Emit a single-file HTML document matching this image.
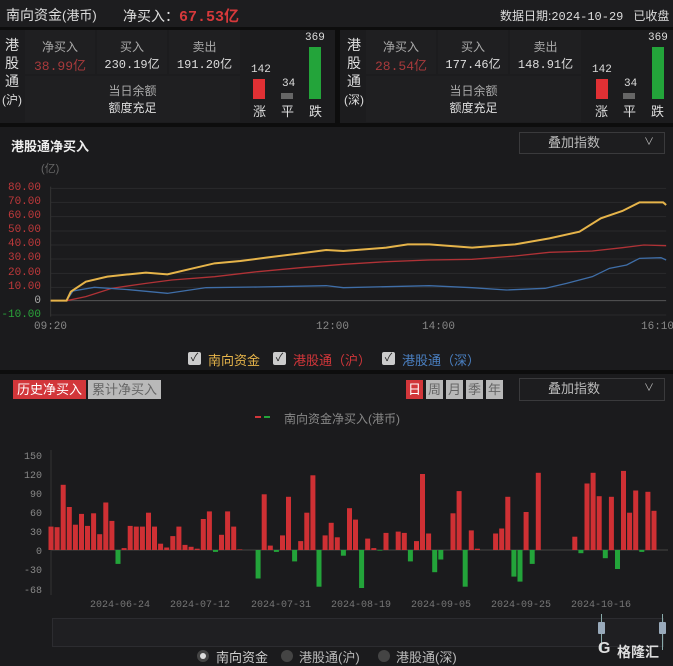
<!DOCTYPE html>
<html><head><meta charset="utf-8"><style>
*{margin:0;padding:0;box-sizing:border-box}
body{width:673px;height:666px;background:#1b1b1d;font-family:"Liberation Sans","Noto Sans CJK SC",sans-serif;color:#ccc;position:relative;overflow:hidden;font-size:12px}
.a{position:absolute}
.mono{font-family:"Liberation Mono","Noto Sans CJK SC",monospace}
.cell{position:absolute;background:#1f1f21;text-align:center}
.vl{position:absolute;width:20px;font-size:14px;line-height:18px;color:#ddd;text-align:center}
.sel{position:absolute;border:1px solid #3a3a3c;background:#1d1d1f;color:#bbb;font-size:13px;padding-left:28px;line-height:20px}
.dt{position:absolute;top:600px;font-size:10px;color:#777;font-family:"Liberation Mono",monospace}
</style></head><body>
<div class="a" style="left:0;top:0;width:673px;height:27px;background:#1d1d1f"></div>
<div class="a" style="left:6px;top:5px;font-size:14px;color:#ddd">南向资金<span style="font-size:13px">(港币)</span></div>
<div class="a" style="left:123px;top:5px;font-size:14px;color:#ddd">净买入：<span class="mono" style="color:#d6393b;font-weight:bold;font-size:15px">67.53亿</span></div>
<div class="a" style="left:500px;top:7px;font-size:12px;color:#ddd">数据日期:<span class="mono">2024-10-29</span>&nbsp;&nbsp;&nbsp;已收盘</div>
<div class="a" style="left:0;top:27px;width:673px;height:3px;background:#0d0d0d"></div>
<div class="a" style="left:335px;top:27px;width:5px;height:98px;background:#0d0d0d"></div>

<div class="a" style="left:0;top:30px;width:335px;height:93px;background:#1c1c1e"></div>
<div class="vl" style="left:2px;top:36px">港<br>股<br>通<br><span style="font-size:12px">(沪)</span></div>
<div class="cell" style="left:25px;top:30px;width:70px;height:44px"><div style="margin-top:8px;color:#aaa">净买入</div><div class="mono" style="color:#a83a3c;font-size:13px">38.99亿</div></div>
<div class="cell" style="left:97px;top:30px;width:70px;height:44px"><div style="margin-top:8px;color:#aaa">买入</div><div class="mono" style="color:#ddd;font-size:12px">230.19亿</div></div>
<div class="cell" style="left:169px;top:30px;width:71px;height:44px"><div style="margin-top:8px;color:#aaa">卖出</div><div class="mono" style="color:#ddd;font-size:12px">191.20亿</div></div>
<div class="cell" style="left:25px;top:76px;width:215px;height:46px"><div style="margin-top:6px;color:#aaa">当日余额</div><div style="color:#ddd">额度充足</div></div>
<div class="a mono" style="left:251px;top:64px;font-size:11px;color:#ddd">142</div>
<div class="a" style="left:253px;top:79px;width:12px;height:20px;background:#e03034"></div>
<div class="a" style="left:253px;top:101px;color:#ddd;font-size:13px">涨</div>
<div class="a mono" style="left:282px;top:78px;font-size:11px;color:#ddd">34</div>
<div class="a" style="left:281px;top:93px;width:12px;height:6px;background:#666"></div>
<div class="a" style="left:281px;top:101px;color:#ddd;font-size:13px">平</div>
<div class="a mono" style="left:305px;top:32px;font-size:11px;color:#ddd">369</div>
<div class="a" style="left:309px;top:47px;width:12px;height:52px;background:#23a43a"></div>
<div class="a" style="left:309px;top:101px;color:#ddd;font-size:13px">跌</div>

<div class="a" style="left:340px;top:30px;width:333px;height:93px;background:#1c1c1e"></div>
<div class="vl" style="left:344px;top:36px">港<br>股<br>通<br><span style="font-size:12px">(深)</span></div>
<div class="cell" style="left:366px;top:30px;width:70px;height:44px"><div style="margin-top:8px;color:#aaa">净买入</div><div class="mono" style="color:#a83a3c;font-size:13px">28.54亿</div></div>
<div class="cell" style="left:438px;top:30px;width:70px;height:44px"><div style="margin-top:8px;color:#aaa">买入</div><div class="mono" style="color:#ddd;font-size:12px">177.46亿</div></div>
<div class="cell" style="left:510px;top:30px;width:71px;height:44px"><div style="margin-top:8px;color:#aaa">卖出</div><div class="mono" style="color:#ddd;font-size:12px">148.91亿</div></div>
<div class="cell" style="left:366px;top:76px;width:215px;height:46px"><div style="margin-top:6px;color:#aaa">当日余额</div><div style="color:#ddd">额度充足</div></div>
<div class="a mono" style="left:592px;top:64px;font-size:11px;color:#ddd">142</div>
<div class="a" style="left:596px;top:79px;width:12px;height:20px;background:#e03034"></div>
<div class="a" style="left:595px;top:101px;color:#ddd;font-size:13px">涨</div>
<div class="a mono" style="left:624px;top:78px;font-size:11px;color:#ddd">34</div>
<div class="a" style="left:623px;top:93px;width:12px;height:6px;background:#666"></div>
<div class="a" style="left:623px;top:101px;color:#ddd;font-size:13px">平</div>
<div class="a mono" style="left:648px;top:32px;font-size:11px;color:#ddd">369</div>
<div class="a" style="left:652px;top:47px;width:12px;height:52px;background:#23a43a"></div>
<div class="a" style="left:651px;top:101px;color:#ddd;font-size:13px">跌</div>

<div class="a" style="left:0;top:123px;width:673px;height:4px;background:#0d0d0d"></div>

<div class="a" style="left:11px;top:136px;font-size:13px;color:#eee;font-weight:bold">港股通净买入</div>
<div class="sel" style="left:519px;top:132px;width:146px;height:22px">叠加指数<span style="position:absolute;right:10px;font-size:10px">∨</span></div>
<div class="a" style="left:41px;top:160px;color:#666;font-size:11px">(亿)</div>
<svg class="a" style="left:0;top:125px" width="673" height="250" viewBox="0 0 1568 750" preserveAspectRatio="none">
<g stroke="#2a2a2c" stroke-width="1">
<line x1="118" x2="1552" y1="190" y2="190" vector-effect="non-scaling-stroke"/><line x1="118" x2="1552" y1="232" y2="232" vector-effect="non-scaling-stroke"/><line x1="118" x2="1552" y1="275" y2="275" vector-effect="non-scaling-stroke"/><line x1="118" x2="1552" y1="318" y2="318" vector-effect="non-scaling-stroke"/><line x1="118" x2="1552" y1="360" y2="360" vector-effect="non-scaling-stroke"/><line x1="118" x2="1552" y1="402" y2="402" vector-effect="non-scaling-stroke"/><line x1="118" x2="1552" y1="445" y2="445" vector-effect="non-scaling-stroke"/><line x1="118" x2="1552" y1="487" y2="487" vector-effect="non-scaling-stroke"/><line x1="118" x2="1552" y1="570" y2="570" vector-effect="non-scaling-stroke"/>
</g>
<line x1="118" x2="1552" y1="527" y2="527" stroke="#555" vector-effect="non-scaling-stroke"/>
<line x1="118" x2="118" y1="185" y2="575" stroke="#333" vector-effect="non-scaling-stroke"/>
<polyline fill="none" stroke="#b03236" stroke-width="1.3" vector-effect="non-scaling-stroke" points="118,527 155,527 200,515 260,490 340,475 400,465 500,455 600,440 700,428 800,418 900,410 1000,405 1100,403 1200,393 1280,382 1380,378 1450,368 1500,360 1552,362"/>
<polyline fill="none" stroke="#3f6ea8" stroke-width="1.3" vector-effect="non-scaling-stroke" points="155,527 170,498 220,487 300,494 390,505 480,488 600,486 760,482 800,488 900,485 1000,482 1100,488 1180,495 1270,490 1320,475 1380,455 1420,430 1460,420 1490,400 1540,398 1552,405"/>
<polyline fill="none" stroke="#e6b44a" stroke-width="2" vector-effect="non-scaling-stroke" points="118,527 155,527 165,500 200,470 250,455 300,448 340,443 390,448 450,430 500,415 560,408 620,398 700,385 760,375 800,378 900,368 950,358 1000,358 1100,368 1200,358 1280,340 1350,320 1400,280 1450,258 1490,232 1545,232 1552,240"/>
</svg>
<div class="a mono" style="left:0;top:181px;width:41px;text-align:right;font-size:11px;line-height:14.1px;color:#c0393b">80.00<br>70.00<br>60.00<br>50.00<br>40.00<br>30.00<br>20.00<br>10.00<br><span style="color:#aaa">0</span><br><span style="color:#2aa43a">-10.00</span></div>
<div class="a mono" style="left:34px;top:321px;font-size:11px;color:#888">09:20</div>
<div class="a mono" style="left:316px;top:321px;font-size:11px;color:#888">12:00</div>
<div class="a mono" style="left:422px;top:321px;font-size:11px;color:#888">14:00</div>
<div class="a mono" style="left:641px;top:321px;font-size:11px;color:#888">16:10</div>
<div class="a" style="left:188px;top:352px;width:13px;height:13px;background:#ccc;border-radius:2px;color:#222;font-size:11px;line-height:13px;text-align:center">✓</div>
<div class="a" style="left:208px;top:350px;color:#e6b44a;font-size:13px">南向资金</div>
<div class="a" style="left:273px;top:352px;width:13px;height:13px;background:#ccc;border-radius:2px;color:#222;font-size:11px;line-height:13px;text-align:center">✓</div>
<div class="a" style="left:293px;top:350px;color:#d2363a;font-size:13px">港股通（沪）</div>
<div class="a" style="left:382px;top:352px;width:13px;height:13px;background:#ccc;border-radius:2px;color:#222;font-size:11px;line-height:13px;text-align:center">✓</div>
<div class="a" style="left:402px;top:350px;color:#4a7fc0;font-size:13px">港股通（深）</div>

<div class="a" style="left:0;top:370px;width:673px;height:4px;background:#0d0d0d"></div>

<div class="a" style="left:13px;top:380px;width:73px;height:19px;background:#d2363a;color:#fff;font-size:13px;line-height:19px;text-align:center">历史净买入</div>
<div class="a" style="left:88px;top:380px;width:73px;height:19px;background:#b9b9b9;color:#666;font-size:13px;line-height:19px;text-align:center">累计净买入</div>
<div class="a" style="left:406px;top:380px;width:17px;height:19px;background:#d2363a;color:#fff;font-size:13px;line-height:19px;text-align:center">日</div>
<div class="a" style="left:426px;top:380px;width:17px;height:19px;background:#b9b9b9;color:#666;font-size:13px;line-height:19px;text-align:center">周</div>
<div class="a" style="left:446px;top:380px;width:17px;height:19px;background:#b9b9b9;color:#666;font-size:13px;line-height:19px;text-align:center">月</div>
<div class="a" style="left:466px;top:380px;width:17px;height:19px;background:#b9b9b9;color:#666;font-size:13px;line-height:19px;text-align:center">季</div>
<div class="a" style="left:486px;top:380px;width:17px;height:19px;background:#b9b9b9;color:#666;font-size:13px;line-height:19px;text-align:center">年</div>
<div class="sel" style="left:519px;top:378px;width:146px;height:23px">叠加指数<span style="position:absolute;right:10px;font-size:10px">∨</span></div>
<div class="a" style="left:255px;top:416px;width:6px;height:2px;background:#d2363a"></div>
<div class="a" style="left:264px;top:416px;width:6px;height:2px;background:#23a43a"></div>
<div class="a" style="left:284px;top:410px;color:#888;font-size:12px">南向资金净买入(港币)</div>
<div class="a mono" style="left:10px;top:448px;width:32px;text-align:right;font-size:10px;line-height:19px;color:#888">150<br>120<br>90<br>60<br>30<br>0<br>-30</div>
<div class="a mono" style="left:10px;top:586px;width:32px;text-align:right;font-size:10px;color:#888">-68</div>
<svg id="bc" class="a" style="left:0;top:440px" width="673" height="160"></svg>
<div class="dt" style="left:90px">2024-06-24</div>
<div class="dt" style="left:170px">2024-07-12</div>
<div class="dt" style="left:251px">2024-07-31</div>
<div class="dt" style="left:331px">2024-08-19</div>
<div class="dt" style="left:411px">2024-09-05</div>
<div class="dt" style="left:491px">2024-09-25</div>
<div class="dt" style="left:571px">2024-10-16</div>
<div class="a" style="left:52px;top:618px;width:612px;height:29px;background:#1f1f22;border:1px solid #2c2c30"></div>
<div class="a" style="left:601px;top:614px;width:1px;height:36px;background:#8aa"></div>
<div class="a" style="left:598px;top:622px;width:7px;height:12px;background:#9ab;border-radius:1px"></div>
<div class="a" style="left:662px;top:614px;width:1px;height:36px;background:#8aa"></div>
<div class="a" style="left:659px;top:622px;width:7px;height:12px;background:#9ab;border-radius:1px"></div>
<div class="a" style="left:197px;top:650px;width:12px;height:12px;border-radius:6px;background:#555;border:3px solid #444"></div>
<div class="a" style="left:200px;top:653px;width:6px;height:6px;border-radius:3px;background:#ddd"></div>
<div class="a" style="left:216px;top:647px;color:#ccc;font-size:13px">南向资金</div>
<div class="a" style="left:281px;top:650px;width:12px;height:12px;border-radius:6px;background:#444"></div>
<div class="a" style="left:299px;top:647px;color:#bbb;font-size:13px">港股通(沪)</div>
<div class="a" style="left:378px;top:650px;width:12px;height:12px;border-radius:6px;background:#444"></div>
<div class="a" style="left:396px;top:647px;color:#bbb;font-size:13px">港股通(深)</div>
<div class="a" style="left:598px;top:640px;color:#ddd;font-size:16px;font-weight:bold">G</div>
<div class="a" style="left:617px;top:642px;color:#ddd;font-size:14px;font-weight:bold">格隆汇</div>
<script>
var v=[37,36,103,68,40,57,38,58,25,75,46,-22,3,38,37,37,59,37,10,4,22,37,8,5,2,49,61,-3,24,61,37,1,0,0,-45,88,7,-3,23,84,-18,14,59,118,-58,23,43,20,-9,66,48,-60,18,3,-1,27,0,29,27,-18,14,120,26,-35,-15,0,58,93,-58,31,2,0,0,26,34,84,-42,-50,60,-22,122,0,0,0,0,0,21,-5,105,122,85,-13,84,-30,125,59,94,-3,92,62];
var s='<line x1="51" x2="668" y1="110" y2="110" stroke="#444"/><line x1="51" x2="51" y1="10" y2="155" stroke="#333"/>';
var n=v.length,p=(654-51)/(n-1),k=0.633;
for(var i=0;i<n;i++){var x=51+i*p-2.5,h=Math.abs(v[i])*k;if(h<0.5)continue;
s+='<rect x="'+x.toFixed(1)+'" width="5" y="'+(v[i]>0?110-h:110).toFixed(1)+'" height="'+h.toFixed(1)+'" fill="'+(v[i]>0?'#cf3034':'#23a43a')+'"/>';}
document.getElementById('bc').innerHTML=s;
</script>
</body></html>
